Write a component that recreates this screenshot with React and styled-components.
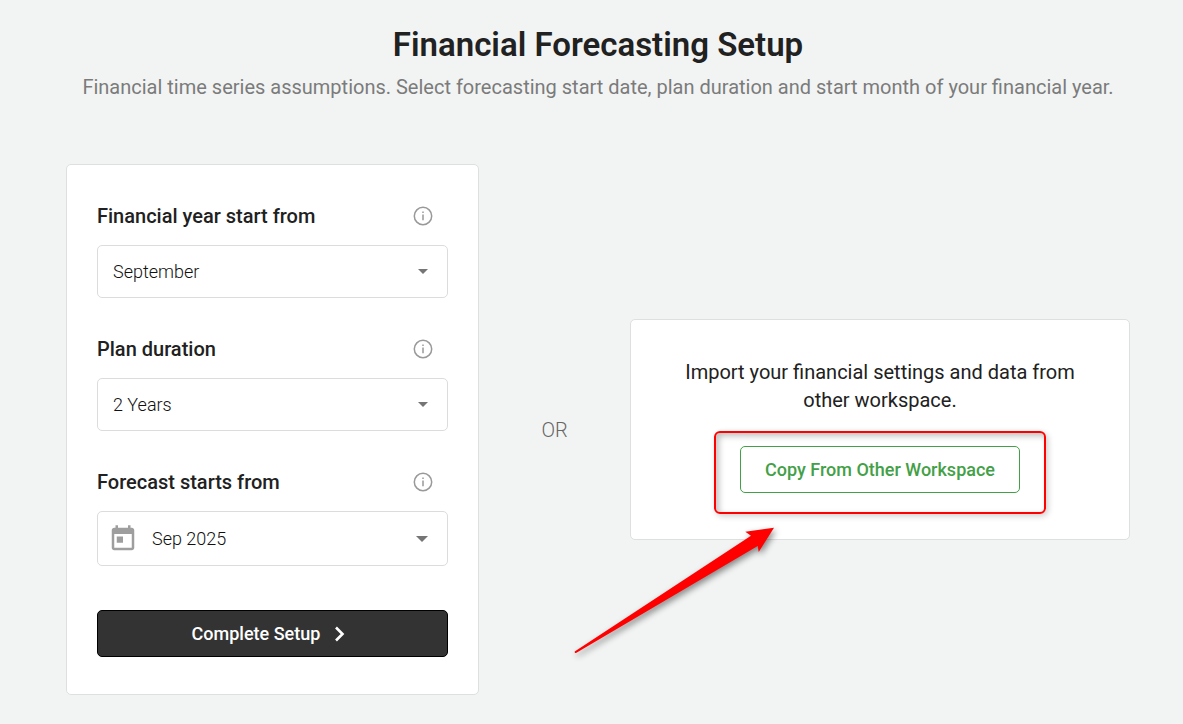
import React from "react";
import styled, { createGlobalStyle } from "styled-components";

const GlobalStyle = createGlobalStyle`
  * { box-sizing: border-box; }
  body {
    margin: 0;
    background: #f2f4f3;
    color: #212121;
    font-family: Roboto, "Liberation Sans", sans-serif;
  }
  button, input, select { font-family: inherit; }
`;

const Page = styled.main`
  padding: 21px 53px 29px 66px;
`;

const Header = styled.header`
  text-align: center;
  margin-bottom: 63px;
`;

const Title = styled.h1`
  margin: 0;
  font-size: 33px;
  line-height: 48px;
  font-weight: 600;
`;

const Subtitle = styled.p`
  margin: 4px 0 0;
  font-size: 20px;
  line-height: 28px;
  font-weight: 400;
  color: #7b7b7b;
`;

const Options = styled.div`
  display: grid;
  grid-template-columns: 413fr 151fr 500fr;
  align-items: center;
`;

const Card = styled.section`
  background: #fff;
  border: 1px solid #dedfdf;
  border-radius: 5px;
`;

const SetupCard = styled(Card)`
  padding: 37px 30px;
`;

const Separator = styled.span`
  text-align: center;
  font-size: 20px;
  line-height: 28px;
  font-weight: 300;
  color: #666;
`;

const ImportCard = styled(Card)`
  position: relative;
  padding: 38px 50px 46px;
  text-align: center;
`;

const Form = styled.form`
  display: flex;
  flex-direction: column;
  gap: 37px;
`;

const LabelRow = styled.div`
  display: flex;
  align-items: center;
  justify-content: space-between;
  padding-right: 15px;
  margin-bottom: 15px;
`;

const Label = styled.label`
  font-size: 20px;
  line-height: 28px;
  font-weight: 500;
`;

const Control = styled.div`
  display: grid;
  align-items: center;
  position: relative;
`;

const controlStyle = `
  appearance: none;
  width: 100%;
  margin: 0;
  background: #fff;
  border: 1px solid #dcdcdc;
  border-radius: 5px;
  color: #111;
  font-size: 18px;
  font-weight: 300;
`;

const Select = styled.select`
  ${controlStyle}
  height: 53px;
  padding: 0 40px 0 15px;
`;

const DateInput = styled.input`
  ${controlStyle}
  height: 55px;
  padding: 0 40px 0 54px;
`;

const Caret = styled.svg`
  position: absolute;
  right: 20px;
  width: ${(p) => (p.$large ? 12 : 10)}px;
  height: ${(p) => (p.$large ? 6 : 5)}px;
  fill: #757575;
  pointer-events: none;
`;

const CalendarIcon = styled.svg`
  position: absolute;
  left: 11px;
  width: 30px;
  height: 30px;
  fill: #9e9e9e;
  pointer-events: none;
`;

const SubmitButton = styled.button`
  display: flex;
  align-items: center;
  justify-content: center;
  gap: 14px;
  height: 47px;
  margin-top: 7px;
  padding: 0 16px 0 8px;
  border: 1px solid #000;
  border-radius: 5px;
  background: #333;
  color: #fff;
  font-size: 18px;
  font-weight: 500;
`;

const ImportText = styled.p`
  margin: 0 0 32px;
  font-size: 20px;
  line-height: 28px;
  font-weight: 400;
`;

const CopyArea = styled.div`
  position: relative;
  display: inline-flex;
  vertical-align: top;
`;

const CopyButton = styled.button`
  width: 280px;
  height: 47px;
  padding: 0;
  border: 1px solid #43a047;
  border-radius: 5px;
  background: #fff;
  color: #43a047;
  font-size: 18px;
  font-weight: 500;
`;

const Highlight = styled.div`
  position: absolute;
  inset: -15px -26px -21px;
  border: 2px solid #ff0000;
  border-radius: 6px;
  box-shadow: 2px 2px 6px rgba(0, 0, 0, 0.2), inset 3px 3px 6px rgba(0, 0, 0, 0.25);
  pointer-events: none;
`;

const Arrow = styled.svg`
  position: absolute;
  left: -71px;
  top: 190px;
  width: 240px;
  height: 160px;
  overflow: visible;
  filter: drop-shadow(2px 3px 3px rgba(0, 0, 0, 0.45));
  pointer-events: none;
`;

const InfoIcon = () => (
  <svg width="20" height="20" viewBox="0 0 20 20" fill="none" aria-hidden="true">
    <circle cx="10" cy="10" r="8.7" stroke="#999" strokeWidth="1.5" />
    <path d="M10 8.6v5.6M10 5.4v1.7" stroke="#aaa" strokeWidth="1.8" />
  </svg>
);

const CaretIcon = ({ large }) => (
  <Caret $large={large} viewBox="0 0 10 5" aria-hidden="true">
    <path d="M0 0h10L5 5z" />
  </Caret>
);

const Field = ({ id, label, children }) => (
  <div>
    <LabelRow>
      <Label htmlFor={id}>{label}</Label>
      <InfoIcon />
    </LabelRow>
    <Control>{children}</Control>
  </div>
);

const months = ["January", "February", "March", "April", "May", "June", "July", "August", "September", "October", "November", "December"];
const durations = ["1 Year", "2 Years", "3 Years", "4 Years", "5 Years"];

export default function App() {
  return (
    <Page>
      <GlobalStyle />
      <Header>
        <Title>Financial Forecasting Setup</Title>
        <Subtitle>
          Financial time series assumptions. Select forecasting start date, plan duration and start month of your financial year.
        </Subtitle>
      </Header>
      <Options>
        <SetupCard>
          <Form onSubmit={(e) => e.preventDefault()}>
            <Field id="year-start" label="Financial year start from">
              <Select id="year-start" defaultValue="September">
                {months.map((m) => <option key={m}>{m}</option>)}
              </Select>
              <CaretIcon />
            </Field>
            <Field id="duration" label="Plan duration">
              <Select id="duration" defaultValue="2 Years">
                {durations.map((d) => <option key={d}>{d}</option>)}
              </Select>
              <CaretIcon />
            </Field>
            <Field id="forecast-start" label="Forecast starts from">
              <DateInput id="forecast-start" type="text" readOnly value="Sep 2025" />
              <CalendarIcon viewBox="0 0 24 24" aria-hidden="true">
                <path d="M19 3h-1V1h-2v2H8V1H6v2H5c-1.110 0-2 .9-2 2v14c0 1.100.89 2 2 2h14c1.100 0 2-.9 2-2V5c0-1.100-.9-2-2-2zm0 16H5V8h14v11zM7 10h5v5H7z" />
              </CalendarIcon>
              <CaretIcon large />
            </Field>
            <SubmitButton type="submit">
              Complete Setup
              <svg width="11" height="16" viewBox="0 0 11 16" fill="none" aria-hidden="true">
                <path d="M2 1.500l6.500 6.500L2 14.500" stroke="#fff" strokeWidth="2.600" />
              </svg>
            </SubmitButton>
          </Form>
        </SetupCard>
        <Separator>OR</Separator>
        <ImportCard>
          <ImportText>Import your financial settings and data from other workspace.</ImportText>
          <CopyArea>
            <CopyButton type="button">Copy From Other Workspace</CopyButton>
            <Highlight />
          </CopyArea>
          <Arrow viewBox="560 510 240 160" aria-hidden="true">
            <path d="M774 527.700L745.300 531.700L751 535.700L574.700 651.500Q574.500 653.500 576 653L757.700 546L758.700 552Z" fill="#ff0000" />
          </Arrow>
        </ImportCard>
      </Options>
    </Page>
  );
}
